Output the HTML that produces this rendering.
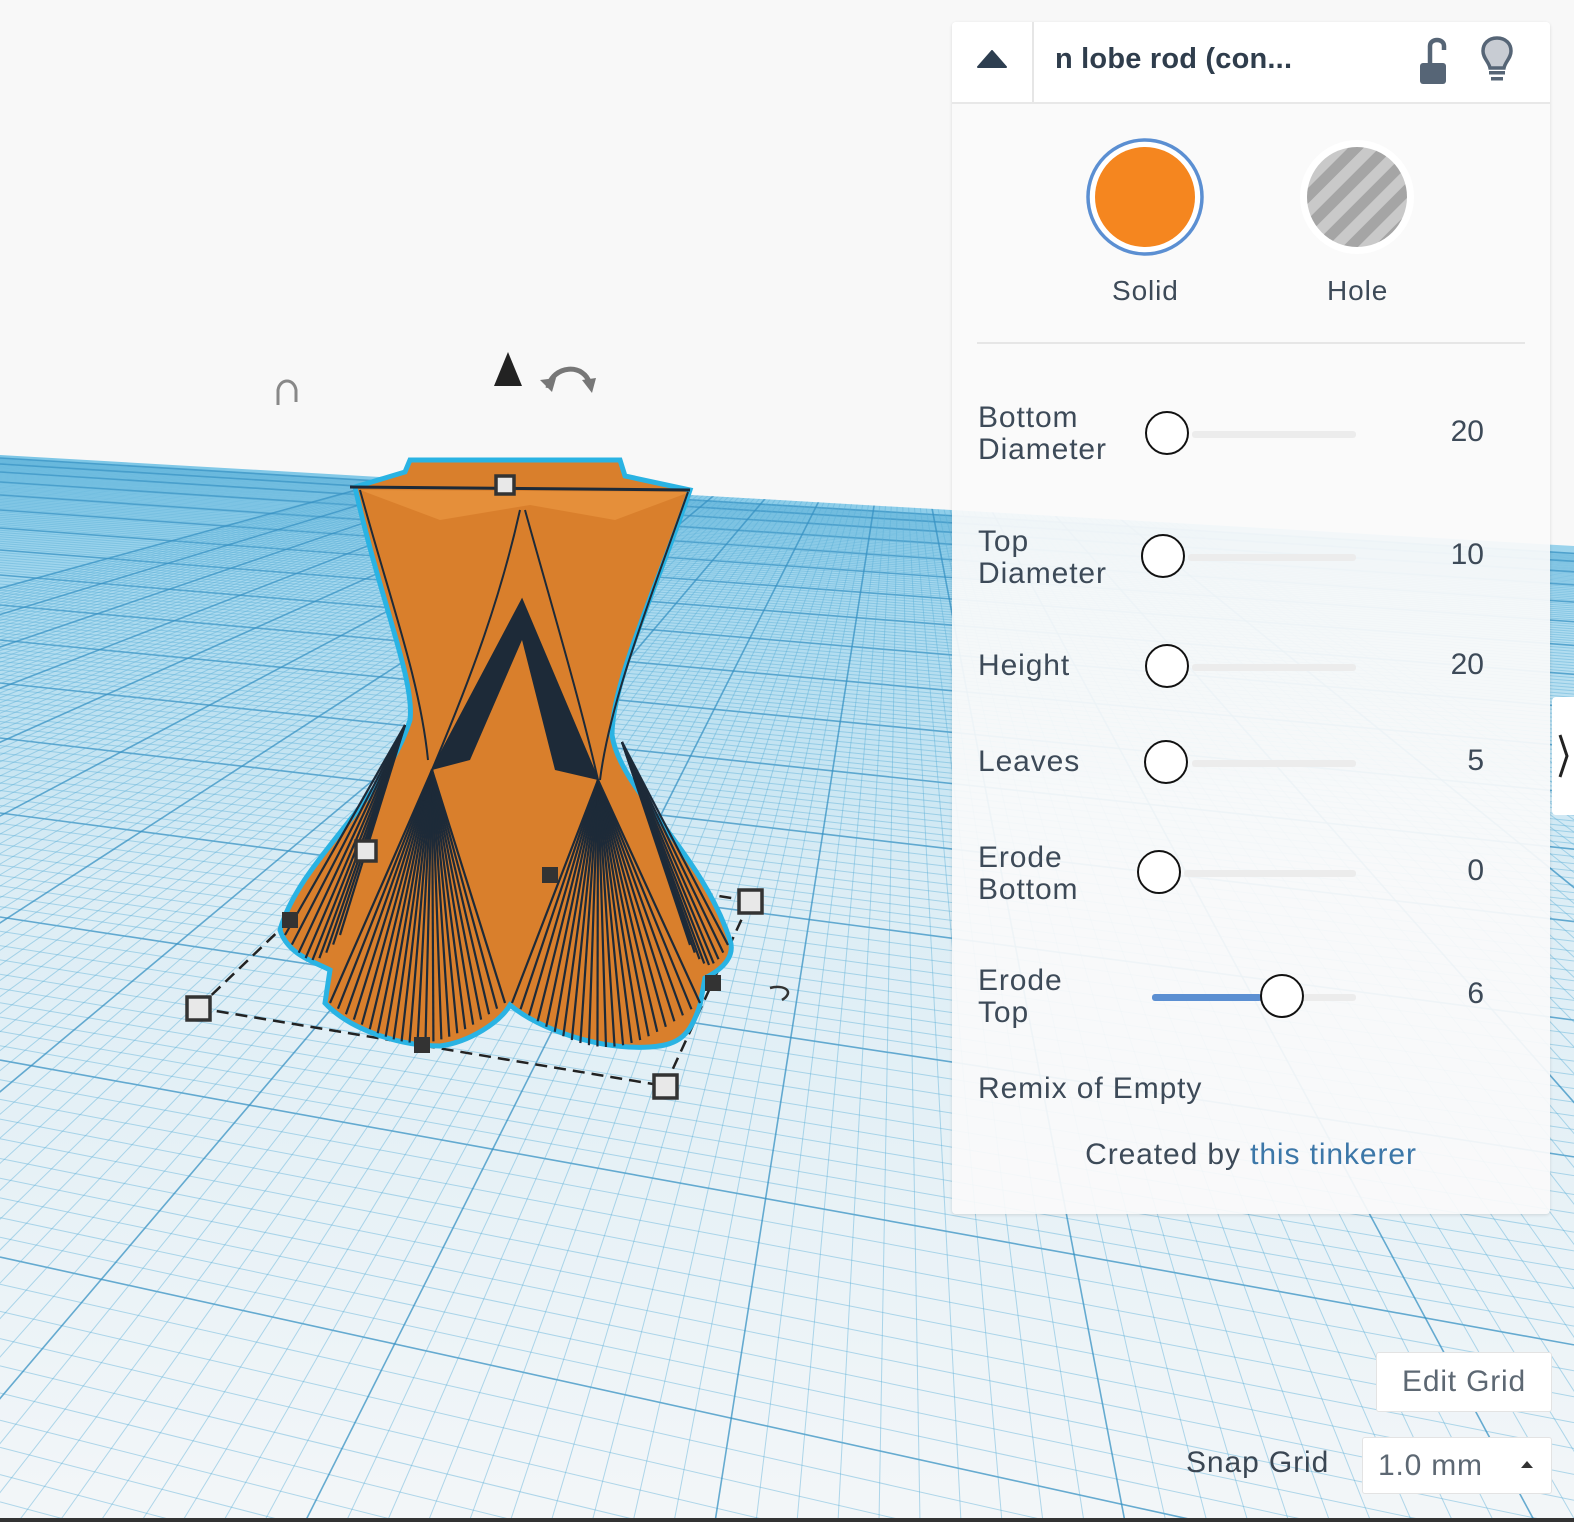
<!DOCTYPE html>
<html><head><meta charset="utf-8">
<style>
html,body{margin:0;padding:0;width:1574px;height:1522px;overflow:hidden;background:#f8f8f8;font-family:"Liberation Sans",sans-serif;position:relative}
#scene{position:absolute;left:0;top:0}
.panel{position:absolute;left:952px;top:22px;width:598px;height:1192px;background:rgba(250,250,250,0.93);border-radius:4px;box-shadow:0 1px 3px rgba(0,0,0,0.12);}
.hdr{position:absolute;left:0;top:0;width:598px;height:80px;background:#fff;border-bottom:2px solid #e8e8e8;border-radius:4px 4px 0 0}
.sep{position:absolute;left:80px;top:0;width:2px;height:80px;background:#e6e6e6}
.title{position:absolute;left:103px;top:21px;font-size:29px;font-weight:bold;color:#2f3d4c;letter-spacing:0.2px}
.t{position:absolute;color:#3d4a58;font-size:30px;line-height:32px;letter-spacing:0.9px;white-space:nowrap}
.v{position:absolute;color:#3d4a58;font-size:30px;line-height:32px;text-align:right;width:80px}
.trk{position:absolute;height:7px;background:#ececec;border-radius:3px}
.th{position:absolute;width:40px;height:40px;border:2px solid #111;border-radius:50%;background:#fff}
.btn{position:absolute;background:#fff;border:1px solid #e3e3e3;border-radius:3px;color:#5d6873;font-size:30px;letter-spacing:0.8px;box-sizing:border-box}
</style></head><body>
<svg id="scene" width="1574" height="1522" viewBox="0 0 1574 1522">
<defs>
<linearGradient id="gg" x1="0" y1="455" x2="0" y2="1522" gradientUnits="userSpaceOnUse">
<stop offset="0" stop-color="#7cc6e6"/><stop offset="0.12" stop-color="#a6d8ee"/><stop offset="0.4" stop-color="#dcedf5"/><stop offset="1" stop-color="#f3f6f8"/>
</linearGradient>
<clipPath id="gc"><polygon points="0,455 1574,546 1574,1522 0,1522"/></clipPath>
</defs>
<polygon points="0,455 1574,546 1574,1522 0,1522" fill="url(#gg)"/>
<g id="grid" clip-path="url(#gc)"></g>

<g stroke="#222" stroke-width="2.5" stroke-dasharray="12,7" fill="none">
<line x1="198" y1="1008" x2="665" y2="1086"/>
<line x1="665" y1="1086" x2="750" y2="901"/>
<line x1="198" y1="1008" x2="290" y2="920"/>
<line x1="750" y1="901" x2="700" y2="893"/>
</g>

<path d="M355,487 L405,472 L410,460 L620,460 L625,476 L690,490 C660,580 612,680 612,735 C620,790 700,850 730,940 C735,955 725,968 705,978 L700,1005 C690,1035 680,1045 650,1047 C600,1050 540,1030 510,1005 C500,1022 470,1042 440,1046 C400,1046 350,1030 325,1003 L330,970 C315,962 288,955 280,930 C300,860 385,800 410,720 C415,680 380,600 355,487 Z" fill="#d97f2c" stroke="#2ab3e3" stroke-width="5"/>
<path d="M360,490 L690,492 L615,520 L530,505 L440,520 Z" fill="#e58f3a"/>
<g stroke="#1d2a38" stroke-width="2" fill="none">
<path d="M360,490 C390,600 420,680 428,760"/>
<path d="M688,492 C650,600 610,700 600,780"/>
<path d="M520,510 C500,600 470,680 432,770"/>
<path d="M525,510 C550,600 580,700 598,780"/>
<path d="M432,770 L522,600 L598,780"/>
</g>
<path d="M432,770 L522,600 L598,780 L555,770 L522,640 L470,760 Z" fill="#1d2a38"/>
<g id="fans" stroke="#1d2a38" stroke-width="2.2"></g>
<path d="M350,487 L690,490" stroke="#1d2a38" stroke-width="3"/>

<g fill="#e8e8e8" stroke="#333" stroke-width="3.5">
<rect x="496" y="476" width="18" height="18"/>
<rect x="356" y="841" width="20" height="20"/>
<rect x="739" y="890" width="23" height="23"/>
<rect x="187" y="997" width="23" height="23"/>
<rect x="654" y="1075" width="23" height="23"/>
</g>
<g fill="#333">
<rect x="282" y="912" width="16" height="16"/>
<rect x="542" y="867" width="16" height="16"/>
<rect x="705" y="975" width="16" height="16"/>
<rect x="414" y="1037" width="16" height="16"/>
</g>
<polygon points="508,352 494,386 522,386" fill="#222"/>
<path d="M548,388 C552,365 585,362 590,385" stroke="#777" stroke-width="5" fill="none"/>
<polygon points="540,380 552,392 556,378" fill="#777"/><polygon points="582,380 596,378 592,393" fill="#777"/>
<path d="M278,405 L278,390 C280,378 294,378 296,390 L296,402" stroke="#888" stroke-width="3" fill="none"/>
<path d="M770,988 C785,984 795,992 782,1000" stroke="#333" stroke-width="2.5" fill="none"/>
<rect x="0" y="1518" width="1574" height="4" fill="#333"/>
</svg>

<div class="panel">
 <div class="hdr">
  <svg style="position:absolute;left:24px;top:28px" width="32" height="20"><polygon points="16,1 30,17 2,17" fill="#2d3e50" stroke="#2d3e50" stroke-width="2" stroke-linejoin="round"/></svg>
  <div class="sep"></div>
  <div class="title">n lobe rod (con...</div>
  <svg style="position:absolute;left:460px;top:14px" width="40" height="58">
   <path d="M18,35 L18,10 C18,2 32,2 32,10 L32,14" stroke="#566576" stroke-width="4.5" fill="none"/>
   <rect x="8" y="27" width="26" height="21" rx="3" fill="#566576"/>
  </svg>
  <svg style="position:absolute;left:528px;top:12px" width="36" height="56">
   <path d="M17,4 C8,4 3,10 3,17 C3,24 9,28 10,34 L24,34 C25,28 31,24 31,17 C31,10 26,4 17,4 Z" fill="#c8ccd3" stroke="#566576" stroke-width="3.5"/>
   <rect x="9" y="37" width="16" height="3.5" fill="#566576"/><rect x="11" y="43" width="12" height="3.5" fill="#566576"/>
  </svg>
 </div>
 <svg style="position:absolute;left:130px;top:112px" width="340" height="130">
  <circle cx="63" cy="63" r="57" fill="#fff" stroke="#5b8fd2" stroke-width="3.5"/>
  <circle cx="63" cy="63" r="50" fill="#f5861f"/>
  <defs><pattern id="st" width="22" height="22" patternUnits="userSpaceOnUse" patternTransform="rotate(45)"><rect width="22" height="22" fill="#c9c9c9"/><rect width="11" height="22" fill="#a5a5a5"/></pattern></defs>
  <circle cx="275" cy="63" r="57" fill="#fff"/>
  <circle cx="275" cy="63" r="50" fill="url(#st)"/>
 </svg>
 <div class="t" style="left:160px;top:253px;font-size:28px">Solid</div>
 <div class="t" style="left:375px;top:253px;font-size:28px">Hole</div>
 <div style="position:absolute;left:25px;top:320px;width:548px;height:2px;background:#e6e6e6"></div>

 <div class="t" style="left:26px;top:380px">Bottom<br>Diameter</div>
 <div class="trk" style="left:240px;top:409px;width:164px"></div>
 <div class="th" style="left:193px;top:389px"></div>
 <div class="v" style="left:452px;top:394px">20</div>

 <div class="t" style="left:26px;top:504px">Top<br>Diameter</div>
 <div class="trk" style="left:236px;top:532px;width:168px"></div>
 <div class="th" style="left:189px;top:512px"></div>
 <div class="v" style="left:452px;top:517px">10</div>

 <div class="t" style="left:26px;top:628px">Height</div>
 <div class="trk" style="left:240px;top:642px;width:164px"></div>
 <div class="th" style="left:193px;top:622px"></div>
 <div class="v" style="left:452px;top:627px">20</div>

 <div class="t" style="left:26px;top:724px">Leaves</div>
 <div class="trk" style="left:240px;top:738px;width:164px"></div>
 <div class="th" style="left:192px;top:718px"></div>
 <div class="v" style="left:452px;top:723px">5</div>

 <div class="t" style="left:26px;top:820px">Erode<br>Bottom</div>
 <div class="trk" style="left:232px;top:848px;width:172px"></div>
 <div class="th" style="left:185px;top:828px"></div>
 <div class="v" style="left:452px;top:833px">0</div>

 <div class="t" style="left:26px;top:943px">Erode<br>Top</div>
 <div class="trk" style="left:200px;top:972px;width:204px"></div>
 <div class="trk" style="left:200px;top:972px;width:110px;background:#5b8fd2"></div>
 <div class="th" style="left:308px;top:952px"></div>
 <div class="v" style="left:452px;top:956px">6</div>

 <div class="t" style="left:26px;top:1051px">Remix of Empty</div>
 <div class="t" style="left:0;top:1117px;width:598px;text-align:center">Created by <span style="color:#3c77a8">this tinkerer</span></div>
</div>

<div style="position:absolute;left:1552px;top:697px;width:22px;height:118px;background:#fff;border-radius:4px 0 0 4px;overflow:hidden">
<svg width="22" height="118"><path d="M8,38 L15,59 L8,80" stroke="#222" stroke-width="3" fill="none"/></svg></div>

<div class="btn" style="left:1376px;top:1352px;width:176px;height:60px;line-height:58px;text-align:center">Edit Grid</div>
<div class="t" style="left:1186px;top:1447px;color:#3a4653">Snap Grid</div>
<div class="btn" style="left:1362px;top:1437px;width:190px;height:57px;line-height:56px"><span style="position:absolute;left:15px">1.0 mm</span>
<svg style="position:absolute;left:157px;top:22px" width="14" height="10"><polygon points="7,1 13,8 1,8" fill="#333"/></svg></div>

<script>
(function(){
var ns="http://www.w3.org/2000/svg",g=document.getElementById('grid');
function L(x1,y1,x2,y2,c,w){var l=document.createElementNS(ns,'line');l.setAttribute('x1',x1);l.setAttribute('y1',y1);l.setAttribute('x2',x2);l.setAttribute('y2',y2);l.setAttribute('stroke',c);l.setAttribute('stroke-width',w);g.appendChild(l);}
var V1=[-5000,155],V2=[900,340];
var ys=[458,464,472,482,495,510,528,550,575,605,640,683,738,813,917,1060,1257,1529,1860];
for(var i=0;i<ys.length-1;i++){
 for(var k=1;k<10;k++){var y=ys[i]+(ys[i+1]-ys[i])*k/10;
  var s=(y-V1[1])/(0-V1[0]);L(0,y,1574,y+s*1574,'rgba(90,175,215,0.45)',1);}
}
for(var i=0;i<ys.length;i++){var y=ys[i];var s=(y-V1[1])/(0-V1[0]);L(0,y,1574,y+s*1574,'rgba(55,145,195,0.75)',1.6);}
function vl(bx,c,w){L(V2[0],V2[1],bx,1522,c,w);}
for(var b=-105-410*8;b<2600;b+=410){
 for(var k=1;k<10;k++)vl(b+41*k,'rgba(90,175,215,0.45)',1);
 vl(b,'rgba(55,145,195,0.75)',1.6);
}
var f=document.getElementById('fans');
function fan(ax,ay,pts){pts.forEach(function(p){var l=document.createElementNS(ns,'line');l.setAttribute('x1',ax);l.setAttribute('y1',ay);l.setAttribute('x2',p[0]);l.setAttribute('y2',p[1]);f.appendChild(l);});}
function arc(x0,x1,yc,dy,n){var a=[];for(var i=0;i<=n;i++){var t=i/n;var x=x0+(x1-x0)*t;a.push([x,yc+dy*Math.sin(Math.PI*t)]);}return a;}
fan(432,770,arc(330,505,1003,40,22));
fan(598,780,arc(512,700,1003,44,22));
fan(405,725,arc(285,340,935,25,8));
fan(622,742,arc(690,728,945,20,8));
})();
</script>
</body></html>
